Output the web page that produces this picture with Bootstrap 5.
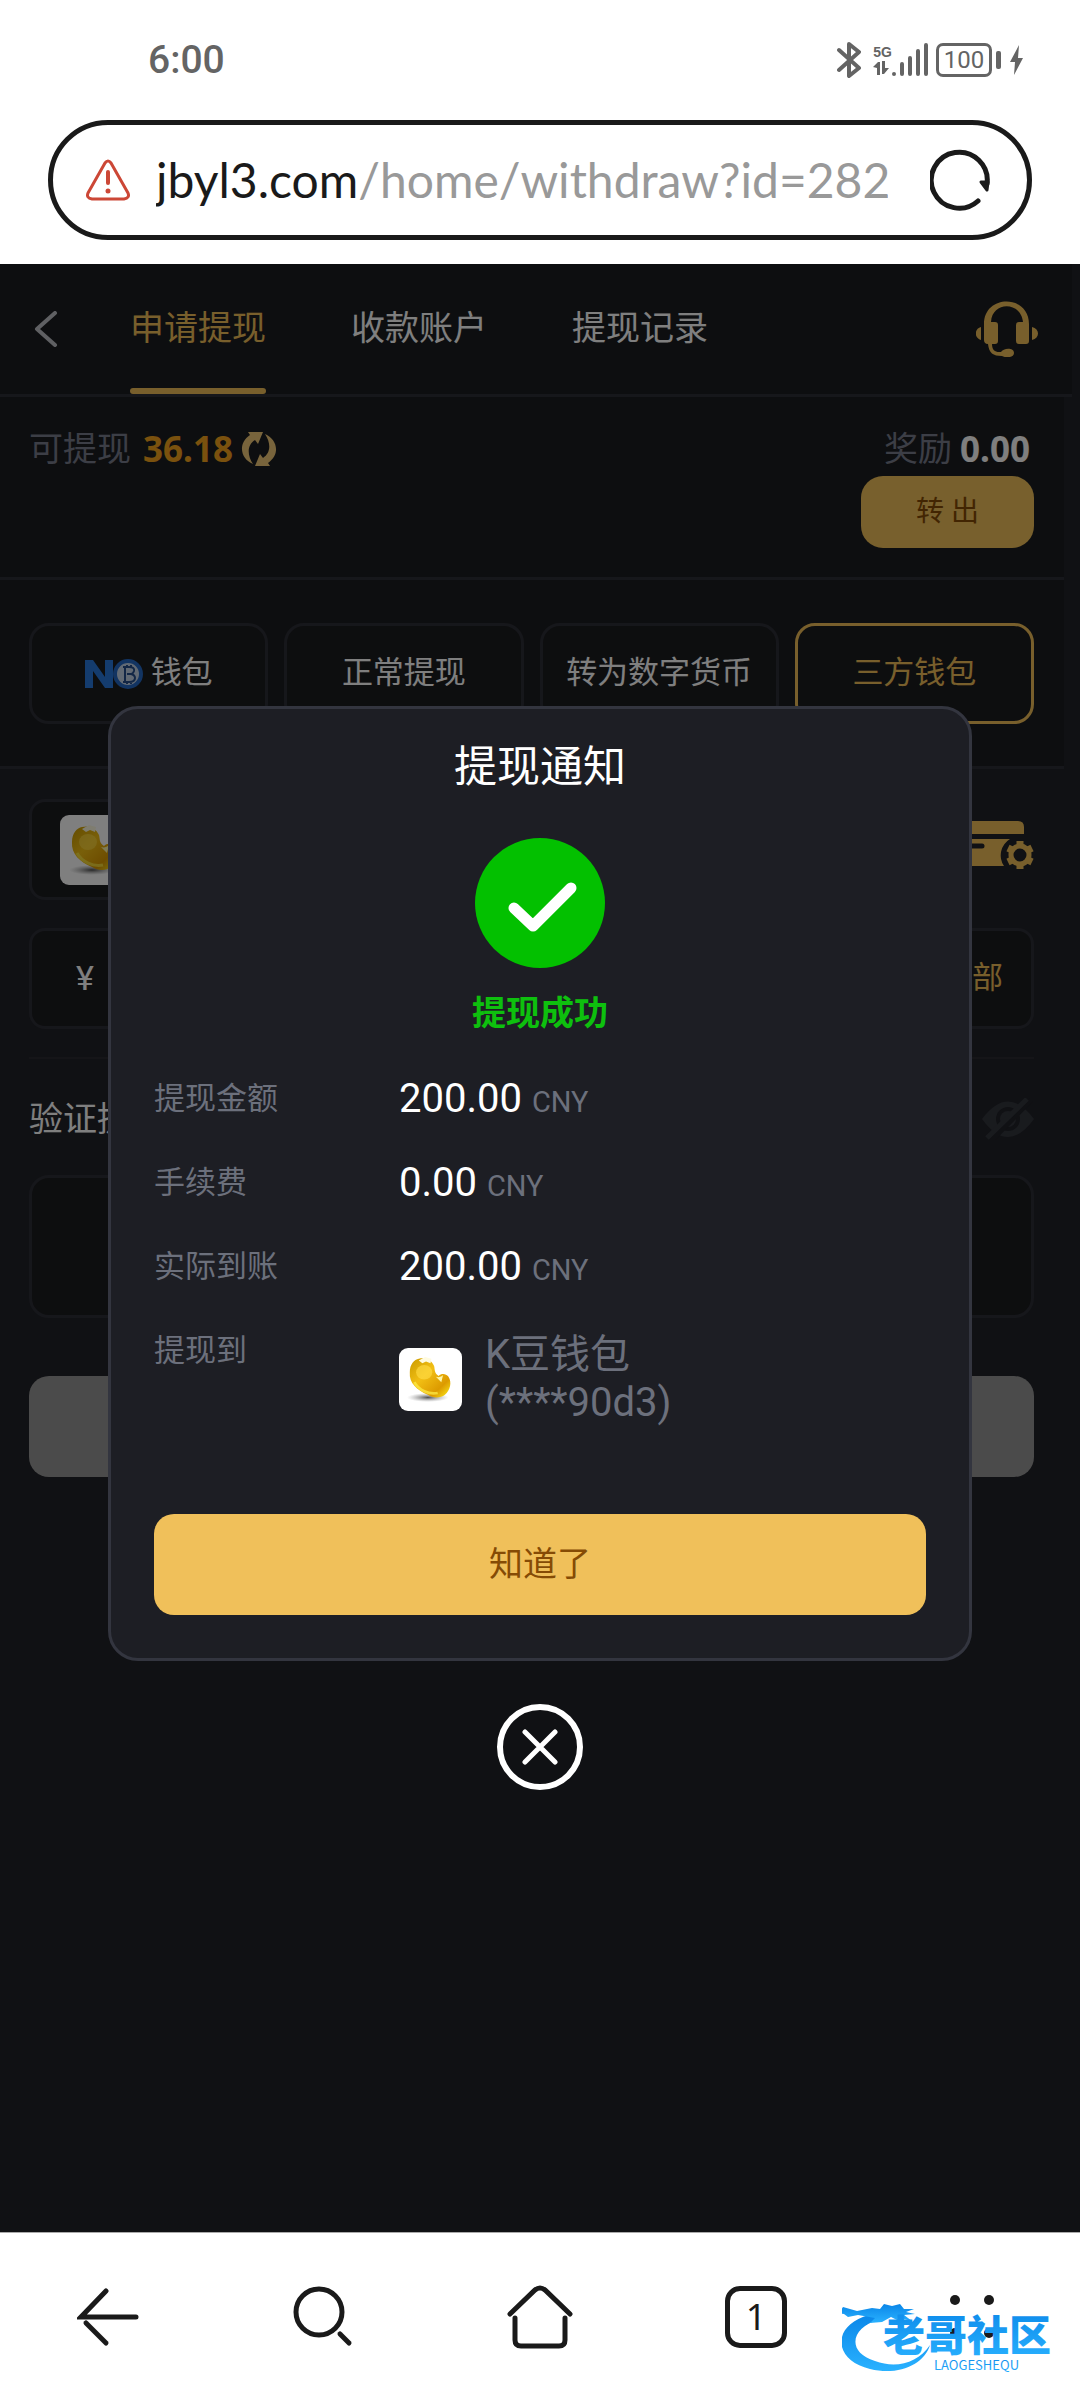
<!DOCTYPE html>
<html lang="zh-CN">
<head>
<meta charset="utf-8">
<meta name="viewport" content="width=device-width, initial-scale=1">
<title>申请提现</title>
<link href="https://cdn.jsdelivr.net/npm/bootstrap@5.3.0/dist/css/bootstrap.min.css" rel="stylesheet">
<style>
  :root { --gold:#f0be58; --line:#2d2e36; --soft:#787c8c; --field:#1b1c1f; }
  body { font-family:Roboto,"Noto Sans CJK SC",sans-serif; background:#fff; color:#1a1a1a; }
  svg { display:block; flex:none; }
  button { font-family:inherit; }
  .status { height:120px; padding:4px 56px 4px 148px; color:#646464; }
  .clock { font-size:39px; font-weight:500; line-height:48px; }
  .net-label { font:bold 14px/16px "Liberation Sans",sans-serif; }
  .battery { width:56px; height:34px; border:3px solid #646464; border-radius:7px; font-size:24px; line-height:28px; }
  .address { height:120px; margin:0 48px 24px; border:5px solid #1a1a1a; padding:0 37px 0 33px; gap:26px; }
  .url { font:48px/64px Lato,"Noto Sans CJK SC",sans-serif; color:#1a1a1a; white-space:nowrap; }
  .url span { color:#999; }
  .page { background:#202228; color:#fff; }
  .topbar { height:133px; margin-right:8px; padding:0 34px; background:#1b1d20; border-bottom:3px solid var(--line); }
  .tabs { gap:85px; margin-left:72px; }
  .tabs a { color:#fff; font-size:34px; line-height:128px; height:130px; text-decoration:none; white-space:nowrap; }
  .tabs a.active { color:var(--gold); position:relative; }
  .tabs a.active::after { content:""; position:absolute; left:0; right:0; bottom:0; height:6px; border-radius:3px; background:var(--gold); }
  .panel { margin-right:16px; padding:0 30px 0 29px; background:#1b1d20; border-bottom:3px solid var(--line); }
  .balance { padding-top:28px; padding-bottom:29px; }
  .money { font-size:34px; line-height:48px; color:var(--soft); }
  .money b { font:bold 35px/48px "Noto Sans",sans-serif; }
  .gold-btn { background:#f0c05a; color:#854b05; border:0; }
  .transfer { width:173px; height:72px; border-radius:22px; margin-top:3px; font-size:28px; }
  .methods { padding-top:43px; padding-bottom:42px; gap:16px; }
  .method { flex:1 1 0; height:101px; border:3px solid var(--line); border-radius:20px; background:var(--field); color:#fff; font-size:31px; padding:0; white-space:nowrap; }
  .method.active { color:var(--gold); border-color:var(--gold); }
  .fields { margin-right:16px; padding:30px 30px 0 29px; }
  .box { border:3px solid var(--line); border-radius:16px; background:var(--field); height:101px; }
  .box input { background:transparent; border:0; color:#fff; min-width:0; font-size:31px; }
  .sep { height:2px; background:#2a2b31; margin:28px 0 36px; }
  .pin { width:100%; height:143px; border:3px solid var(--line); border-radius:20px; background:var(--field); color:#fff; margin-top:32px; display:block; }
  .submit { width:100%; height:101px; border:0; border-radius:20px; background:#969696; margin-top:58px; display:block; }
  .veil { position:absolute; inset:0; background:rgba(0,0,0,.5); }
  .notice { width:80%; background:#1d1e24; border:3px solid #33353f; border-radius:30px; padding:26px 43px 43px; color:#fff; }
  .notice h1 { font-size:43px; line-height:64px; font-weight:400; }
  .notice h2 { font-size:34px; line-height:48px; font-weight:700; color:#0ec00e; margin:21px 0 20px; }
  .info dt { width:245px; font-size:31px; line-height:84px; font-weight:400; color:#6c707c; }
  .info dd { font-size:40px; line-height:84px; }
  .info small { font-size:29px; line-height:1; color:#6c707c; }
  .info .wallet { padding-top:22px; gap:23px; line-height:48px; color:#6c707c; }
  .tile { background:#fff; border-radius:9px; }
  .ok { width:100%; height:101px; border-radius:20px; font-size:34px; margin-top:87px; }
  .shut { width:86px; height:86px; border:6px solid #fff; border-radius:50%; background:transparent; margin-top:43px; padding:0; }
  .toolbar { height:168px; border-top:1px solid #aaa; background:#fff; }
  .toolbar a { flex:1 1 0; color:#1a1a1a; }
  .tabcount { width:62px; height:62px; border:5px solid #1a1a1a; border-radius:15px; font:36px/52px "Noto Sans",sans-serif; }
  .brand { position:absolute; right:16px; bottom:20px; width:222px; height:76px; }
  .brand text { font-family:"Noto Sans CJK SC",sans-serif; }
</style>
<script src="https://cdn.jsdelivr.net/npm/bootstrap@5.3.0/dist/js/bootstrap.bundle.min.js"></script>
</head>
<body>
<svg width="0" height="0" class="position-absolute" aria-hidden="true">
  <defs>
    <linearGradient id="beanGold" x1="0" y1="0" x2="1" y2="1"><stop offset="0" stop-color="#c99a00"/><stop offset=".4" stop-color="#f2bf14"/><stop offset=".75" stop-color="#dc9a00"/><stop offset="1" stop-color="#fff21c"/></linearGradient>
    <radialGradient id="beanShade"><stop offset="0" stop-color="#333" stop-opacity=".85"/><stop offset="1" stop-color="#888" stop-opacity="0"/></radialGradient>
    <linearGradient id="blueFade" x1="0" y1="0" x2="0" y2="1"><stop offset="0" stop-color="#0a86e8"/><stop offset="1" stop-color="#2ab2ff"/></linearGradient>
    <symbol id="bean" viewBox="0 0 70 70">
      <ellipse cx="32" cy="55" rx="23" ry="5" fill="url(#beanShade)"/>
      <path d="M12 27C12 18 17 13 22 12c9-2 14 2 17 8 1 4 0 8 5 11 3-3 8-3 11 1 4 6 2 15-4 20-5 4-13 4-19 0C20 47 11 39 12 27Z" fill="url(#beanGold)"/>
      <ellipse cx="28" cy="27" rx="9" ry="8" fill="#ffdc45" opacity=".65"/>
      <path d="M22 14l4 3 4-2 5 2 1-5-7-2Z" fill="#fffbe0"/>
      <path d="M41 32c3 1 6 0 8-2l-2 8Z" fill="#fff6a8"/>
      <path d="M17 38c5 9 16 14 26 12" stroke="#fff04a" stroke-width="3" fill="none" opacity=".7"/>
    </symbol>
  </defs>
</svg>
<div class="d-flex flex-column min-vh-100">
  <header>
    <div class="status d-flex align-items-center justify-content-between">
      <span class="clock">6:00</span>
      <div class="d-flex align-items-center">
        <svg width="24" height="38" viewBox="0 0 24 38" fill="none" stroke="currentColor" stroke-width="4" stroke-linecap="round" stroke-linejoin="round" aria-label="蓝牙"><path d="M2 9l20 18-10 8V3l10 8L2 29"/></svg>
        <div class="d-flex flex-column ms-2 ps-1">
          <span class="net-label">5G</span>
          <svg width="18" height="16" viewBox="0 0 18 16" fill="currentColor"><path d="M0 7l5-5h2v13H4V8ZM9 1h3v7h4l-5 6H9Z"/></svg>
        </div>
        <svg width="36" height="36" viewBox="2 0 36 36" stroke="currentColor" stroke-width="4" stroke-linecap="round"><path d="M4 32v0M12 22v10M20 16v16M28 9v23M36 3v29"/></svg>
        <span class="battery ms-2 d-flex align-items-center justify-content-center">100</span>
        <svg width="5" height="18" class="ms-1" fill="currentColor"><rect width="5" height="18" rx="2"/></svg>
        <svg width="15" height="32" viewBox="0 0 15 32" class="ms-2" fill="currentColor"><path d="M10 1L1 18h5L5 31l9-17H9Z"/></svg>
      </div>
    </div>
    <div class="address rounded-pill d-flex align-items-center">
      <svg width="44" height="42" viewBox="0 0 44 42" fill="none" stroke="#cc4736" stroke-width="3"><path d="M19 4q3-4 6 0L42 34q2 5-4 6H6q-6-1-4-6Z" stroke-linejoin="round"/><path d="M22 13v11" stroke-width="4" stroke-linecap="round"/><circle cx="22" cy="32" r="2.500" fill="#cc4736" stroke="none"/></svg>
      <a class="url flex-grow-1 overflow-hidden text-decoration-none" href="#" aria-label="地址栏">jbyl3.com<span>/home/withdraw?id=282</span></a>
      <button class="btn p-0 border-0 ms-3" aria-label="刷新"><svg width="60" height="62" viewBox="0 0 60 62" fill="none" stroke="#1a1a1a" stroke-width="5" stroke-linecap="round"><path d="M48 52A28 28 0 1 1 57 35"/><path d="M51 33h7l-1 8Z" fill="#1a1a1a" stroke-width="3" stroke-linejoin="round"/></svg></button>
    </div>
  </header>

  <main class="page flex-grow-1 position-relative">
    <nav class="topbar d-flex align-items-center">
      <a href="#" aria-label="返回"><svg width="24" height="36" viewBox="0 0 24 36" fill="none" stroke="#bfc1c7" stroke-width="4" stroke-linecap="round" stroke-linejoin="round"><path d="M21 2L3 18l18 16"/></svg></a>
      <div class="tabs d-flex flex-grow-1">
        <a class="active" href="#">申请提现</a><a href="#">收款账户</a><a href="#">提现记录</a>
      </div>
      <a href="#" aria-label="客服"><svg width="62" height="56" viewBox="0 0 62 56" fill="#f0be58"><path d="M8 23C8-7 53-7 53 23v17a3 3 0 0 1-3 3H43a3 3 0 0 1-3-3V24a3 3 0 0 1 3-3h4C45 0 16 0 15 21h4a3 3 0 0 1 3 3v16a3 3 0 0 1-3 3H16c0 6 3 8 7 8h2c2-4 13-5 13 1 0 5-9 5-12 3C17 55 13 52 12 43 9 43 8 41 8 39Z"/><path d="M5 26v13c-7-2-7-11 0-13ZM56 26v13c8-2 8-11 0-13Z"/></svg></a>
    </nav>
    <section class="panel balance d-flex justify-content-between">
      <div class="money d-flex align-items-center align-self-start">可提现<b class="ms-2 ps-1" style="color:#f5a31d">36.18</b>
        <button class="btn p-0 border-0 ms-2" aria-label="刷新余额"><svg width="36" height="36" viewBox="0 0 36 36" fill="#f0c878"><path d="M7 1h15l-5 12-3-4C6 14 6 24 12 33 0 28-4 13 9 4Z"/><path d="M29 35H14l5-12 3 4C30 22 30 12 24 3c12 5 16 20 3 29Z"/></svg></button>
      </div>
      <div class="d-flex flex-column align-items-end">
        <div class="money d-flex">奖励<b class="text-white ms-2 me-1">0.00</b></div>
        <button class="gold-btn transfer">转 出</button>
      </div>
    </section>
    <section class="panel methods d-flex">
      <button class="method d-flex align-items-center justify-content-center gap-2">
        <svg width="58" height="30" viewBox="0 0 58 30"><path d="M0 29V1h8l12 17V1h8v28h-8L8 12v17Z" fill="#2878dc"/><circle cx="43" cy="15" r="13" fill="#c5d5e9" stroke="#2468c4" stroke-width="4"/><path d="M38 8h6q6 0 5 4-1 3-3 3 4 1 4 4 0 4-6 4h-6m2-15v15m2-8h5M42 6v3m4-3v3m-4 13v3m4-3v3" fill="none" stroke="#264f8c" stroke-width="2"/></svg>钱包</button>
      <button class="method">正常提现</button>
      <button class="method">转为数字货币</button>
      <button class="method active">三方钱包</button>
    </section>
    <form class="fields">
      <div class="d-flex align-items-center justify-content-between mb-4 pb-1">
        <button type="button" class="box d-flex align-items-center ps-4 w-75" aria-label="选择钱包"><svg width="70" height="70" class="tile ms-1"><use href="#bean"/></svg></button>
        <button type="button" class="btn p-0 border-0 mb-2" aria-label="管理账户"><svg width="76" height="50" viewBox="0 0 76 50" fill="#f0be58"><path d="M0 11V6q0-6 6-6h54q6 0 6 6v7H0ZM0 18h52a19 19 0 0 0-6 27H6q-6 0-6-6Z"/><path d="M12 25h12" stroke="#202228" stroke-width="5" stroke-linecap="round"/><circle cx="62" cy="34" r="9" fill="none" stroke="#f0be58" stroke-width="5"/><path d="M62 20v5m0 18v5M50 27l4 2m16 10l4 2M50 41l4-2m16-10l4-2" stroke="#f0be58" stroke-width="7"/></svg></button>
      </div>
      <div class="box d-flex align-items-center px-4">
        <label for="amount" class="ms-3 ps-1 me-3" style="font-size:34px">¥</label>
        <input id="amount" class="flex-grow-1" type="text">
        <button type="button" class="btn border-0 p-0 me-1" style="color:var(--gold);font-size:31px">全部</button>
      </div>
      <div class="sep"></div>
      <div class="d-flex align-items-center justify-content-between">
        <label for="pin" class="text-nowrap" style="font-size:34px;line-height:48px">验证提款密码</label>
        <button type="button" class="btn border-0 p-0" aria-label="显示密码"><svg width="52" height="42" viewBox="0 0 52 42"><path d="M0 21Q26-14 52 21 26 57 0 21Z" fill="#33363d"/><circle cx="26" cy="21" r="12" fill="#202228"/><circle cx="26" cy="21" r="8" fill="#33363d"/><path d="M9 43L49 2" stroke="#202228" stroke-width="5"/><path d="M5 40L45 1" stroke="#33363d" stroke-width="5"/></svg></button>
      </div>
      <input id="pin" class="pin" type="password">
      <button type="button" class="submit" aria-label="提交"></button>
    </form>

    <div class="veil d-flex flex-column align-items-center justify-content-center">
      <div class="notice" role="dialog" aria-labelledby="noticeTitle">
        <h1 id="noticeTitle" class="text-center mb-0">提现通知</h1>
        <svg width="130" height="130" viewBox="0 0 130 130" class="mx-auto" style="margin-top:39px"><circle cx="65" cy="65" r="65" fill="#03c000"/><path d="M39 70l19 18 38-38" fill="none" stroke="#fff" stroke-width="11" stroke-linecap="round" stroke-linejoin="round"/></svg>
        <h2 class="text-center">提现成功</h2>
        <dl class="info mb-0">
          <div class="d-flex"><dt>提现金额</dt><dd class="mb-0">200.00 <small>CNY</small></dd></div>
          <div class="d-flex"><dt>手续费</dt><dd class="mb-0">0.00 <small>CNY</small></dd></div>
          <div class="d-flex"><dt>实际到账</dt><dd class="mb-0">200.00 <small>CNY</small></dd></div>
          <div class="d-flex"><dt>提现到</dt><dd class="wallet mb-0 d-flex align-items-center"><svg width="63" height="63" class="tile"><use href="#bean"/></svg><span>K豆钱包<br>(****90d3)</span></dd></div>
        </dl>
        <button class="gold-btn ok">知道了</button>
      </div>
      <button class="shut d-flex align-items-center justify-content-center" aria-label="关闭"><svg width="36" height="36" viewBox="0 0 36 36" stroke="#fff" stroke-width="5" stroke-linecap="round"><path d="M3 3l30 30M33 3L3 33"/></svg></button>
    </div>
  </main>

  <footer class="toolbar d-flex align-items-center position-relative">
    <a href="#" class="d-flex justify-content-center" aria-label="后退"><svg width="62" height="62" viewBox="0 0 62 62" fill="none" stroke="#1a1a1a" stroke-width="5" stroke-linecap="round"><path d="M29 5L4 31h55"/><path d="M9 37l20 20"/></svg></a>
    <a href="#" class="d-flex justify-content-center" aria-label="搜索"><svg width="62" height="62" viewBox="0 0 62 62" fill="none" stroke="#1a1a1a" stroke-width="5" stroke-linecap="round"><circle cx="26" cy="26" r="23"/><path d="M47 48l9 9"/></svg></a>
    <a href="#" class="d-flex justify-content-center" aria-label="主页"><svg width="66" height="64" viewBox="0 0 66 64" fill="none" stroke="#1a1a1a" stroke-width="5" stroke-linecap="round"><path d="M3 29L28 5q5-4 10 0l25 24"/><path d="M8 33v22q0 6 6 6h38q6 0 6-6V33"/></svg></a>
    <a href="#" class="d-flex justify-content-center text-decoration-none" aria-label="标签页"><span class="tabcount text-center">1</span></a>
    <a href="#" class="d-flex justify-content-center" aria-label="菜单"><svg width="62" height="62" viewBox="0 0 62 62" fill="#1a1a1a"><circle cx="14" cy="14" r="5"/><circle cx="48" cy="14" r="5"/><circle cx="14" cy="47" r="5"/><circle cx="48" cy="47" r="5"/></svg></a>
    <svg class="brand" viewBox="0 0 222 76" fill="url(#blueFade)" aria-label="老哥社区">
      <path d="M27 11C-12 22-8 57 28 65c28 7 54-4 60-24-12 18-34 24-55 16C3 48 10 22 37 16l5-6Z"/>
      <path d="M1 3l14 4 15-3 8 1 4-5 8 2 8-2 4 5 10 0-8 3 9 2-11 1 8 6-12-3 3 5-12-6-9 5-12 1 5-5-17-3-10 2-4-3-11-1 8-3Z"/>
      <text x="41" y="47" font-size="42" font-weight="900">老哥社区</text>
      <text x="92" y="66" font-size="13">LAOGESHEQU</text>
    </svg>
  </footer>
</div>
</body>
</html>
